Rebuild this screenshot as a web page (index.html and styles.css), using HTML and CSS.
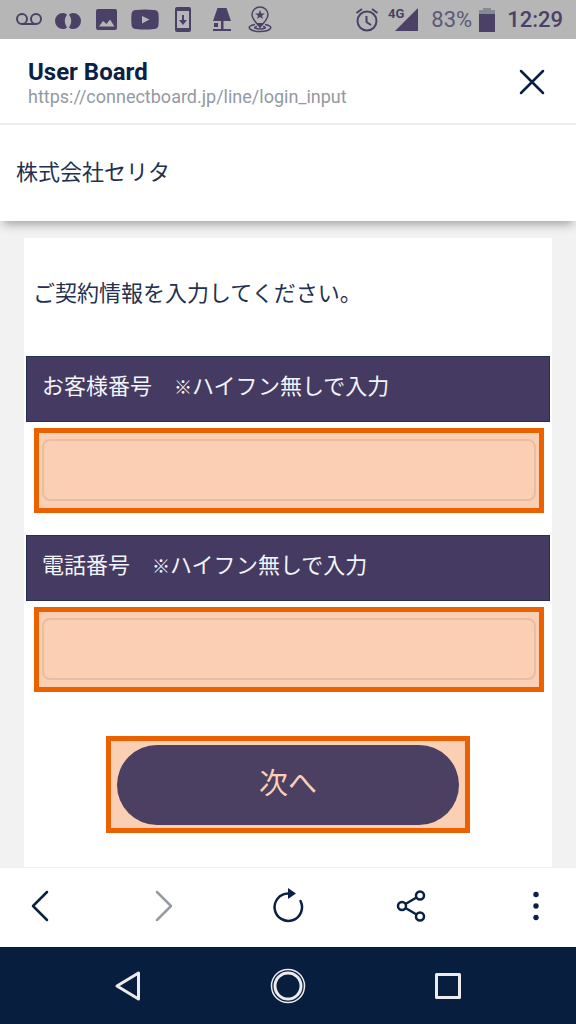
FILE: index.html
```html
<!DOCTYPE html>
<html lang="ja">
<head>
<meta charset="utf-8">
<meta name="viewport" content="width=device-width, initial-scale=1">
<title>User Board</title>
<link rel="stylesheet" href="styles.css">
</head>
<body>
<div class="screen">
  <div class="status">
    <div class="status-icons">
      <svg class="status-icon" viewBox="0 0 28 28" fill="none" stroke="currentColor" stroke-width="2"><circle cx="7" cy="13" r="5"/><circle cx="21" cy="13" r="5"/><path d="M7 18H21"/></svg>
      <svg class="status-icon" viewBox="0 0 28 28" fill="currentColor"><path d="M9 7A8 8 0 0 0 9 23Q11.500 23 13 21.500Q8.500 15 13 8.500Q11.500 7 9 7Z"/><path d="M19 7A8 8 0 0 1 19 23Q16.500 23 15 21.500Q19.500 15 15 8.500Q16.500 7 19 7Z"/></svg>
      <svg class="status-icon" viewBox="0 0 28 28" fill="currentColor" fill-rule="evenodd"><path d="M6 3H23Q25 3 25 5V22Q25 24 23 24H6Q4 24 4 22V5Q4 3 6 3ZM7 20.500H22.500L18 13.500L14.500 18L11 15Z"/></svg>
      <svg class="status-icon" viewBox="0 0 28 28" fill="currentColor" fill-rule="evenodd"><path d="M5 4Q14 3 23 4Q27 4 27.500 8Q28 13 27.500 19Q27 23 23 23Q14 24 5 23Q1 23 .5 19Q0 13 .5 8Q1 4 5 4ZM11 10V17.500L18.500 13.500Z"/></svg>
      <svg class="status-icon" viewBox="0 0 28 28" fill="currentColor" fill-rule="evenodd"><path d="M8 1H20Q22 1 22 3V24Q22 26 20 26H8Q6 26 6 24V3Q6 1 8 1ZM8 5V22H20V5Z"/><path d="M13 9H15V14H18L14 19L10 14H13Z"/></svg>
      <svg class="status-icon" viewBox="0 0 28 28" fill="currentColor"><path d="M9.500 2H18.500L23 15H5Z"/><path d="M13 15H15.500V23H23V25H5V23H13ZM6 17H10V21H6Z"/></svg>
      <svg class="status-icon" viewBox="0 0 28 28" fill="none" stroke="currentColor" stroke-width="1.500"><path d="M14 21Q6 13 6 8.500A8 7.500 0 0 1 22 8.500Q22 13 14 21Z"/><path fill="currentColor" stroke="none" d="M14 4L15.300 7.500H19L16 9.700L17 13L14 11L11 13L12 9.700L9 7.500H12.700ZM10.500 17H17.500L14 22Z"/><path d="M9 18.500C-1 20 3 25.500 14 25.500S29 20 19 18.500M11 20.500C6 21.500 10 23 14 23S22 21.500 17 20.500"/></svg>
    </div>
    <div class="status-info">
      <svg class="alarm" viewBox="0 0 24 26" fill="none" stroke="currentColor" stroke-width="2"><circle cx="12" cy="14" r="9.500"/><path d="M11.500 9V15L16 18M1.500 6L7 2M17 2L22.500 6"/></svg>
      <span class="network">4G</span>
      <svg class="signal" viewBox="0 0 23 24" fill="currentColor"><path d="M0 23H23V0Z"/></svg>
      <span class="percent">83%</span>
      <svg class="battery" viewBox="0 0 16 24"><path fill="#848b93" d="M4 0H12V2H16V6H0V2H4Z"/><path fill="currentColor" d="M0 6H16V24H0Z"/></svg>
      <span class="clock">12:29</span>
    </div>
  </div>

  <header class="browser-bar">
    <div>
      <h1 class="title">User Board</h1>
      <p class="address">https://connectboard.jp/line/login_input</p>
    </div>
    <button class="icon-button" type="button" aria-label="閉じる">
      <svg viewBox="0 0 32 32" fill="none" stroke="currentColor" stroke-width="2.500" stroke-linecap="round"><path d="M5 5L27 27M27 5L5 27"/></svg>
    </button>
  </header>

  <div class="company">株式会社セリタ</div>

  <main class="page">
    <form class="card">
      <p class="prompt">ご契約情報を入力してください。</p>
      <div class="field">
        <label class="field-label" for="customer">お客様番号　<span class="mark">※</span>ハイフン無しで入力</label>
        <div class="highlight"><input class="field-input" id="customer" type="text"></div>
      </div>
      <div class="field">
        <label class="field-label" for="phone">電話番号　<span class="mark">※</span>ハイフン無しで入力</label>
        <div class="highlight"><input class="field-input" id="phone" type="tel"></div>
      </div>
      <div class="highlight highlight-submit"><button class="submit" type="button">次へ</button></div>
    </form>
  </main>

  <nav class="toolbar">
    <button class="icon-button" type="button" aria-label="戻る"><svg viewBox="0 0 32 32" fill="none" stroke="currentColor" stroke-width="2.500" stroke-linecap="round" stroke-linejoin="round"><path d="M23 2L9 16L23 30"/></svg></button>
    <button class="icon-button muted" type="button" aria-label="進む"><svg viewBox="0 0 32 32" fill="none" stroke="currentColor" stroke-width="2.500" stroke-linecap="round" stroke-linejoin="round"><path d="M9 2L23 16L9 30"/></svg></button>
    <button class="icon-button" type="button" aria-label="再読み込み"><svg viewBox="0 0 32 32" fill="none" stroke="currentColor" stroke-width="2.500" stroke-linecap="round"><path d="M17 3.500H16A13.700 13.700 0 1 0 28.500 11"/><path fill="currentColor" stroke="none" d="M16 -2L24 3.500L16 9Z"/></svg></button>
    <button class="icon-button" type="button" aria-label="共有"><svg viewBox="0 0 32 32" fill="none" stroke="currentColor" stroke-width="2.500"><circle cx="6" cy="16" r="4"/><circle cx="24" cy="5.500" r="4"/><circle cx="24" cy="26.500" r="4"/><path d="M9.500 14L20.500 7.500M9.500 18L20.500 24.500"/></svg></button>
    <button class="icon-button" type="button" aria-label="メニュー"><svg viewBox="0 0 32 32" fill="currentColor"><circle cx="16" cy="4.500" r="2.700"/><circle cx="16" cy="16" r="2.700"/><circle cx="16" cy="27.500" r="2.700"/></svg></button>
  </nav>

  <nav class="system-bar">
    <button class="system-button" type="button" aria-label="Back"><svg viewBox="0 0 36 36" fill="none" stroke="currentColor" stroke-width="3" stroke-linejoin="round"><path d="M29.500 5V31L8 18Z"/></svg></button>
    <button class="system-button" type="button" aria-label="Home"><svg viewBox="0 0 36 36" fill="none" stroke="currentColor"><circle cx="18" cy="18" r="16.500" stroke-width="1.500"/><circle cx="18" cy="18" r="13" stroke-width="3"/></svg></button>
    <button class="system-button" type="button" aria-label="Recents"><svg viewBox="0 0 36 36" fill="none" stroke="currentColor" stroke-width="3" stroke-linejoin="round"><path d="M5.500 6.500H28.500V29.500H5.500Z"/></svg></button>
  </nav>
</div>
</body>
</html>
```
FILE: styles.css
```css
* { box-sizing: border-box; }

body {
  margin: 0;
  color: #243050;
  background: #fff;
  font-family: Roboto, "Noto Sans CJK JP", sans-serif;
  font-size: 22px;
}

h1, p { margin: 0; }

button {
  padding: 0;
  border: 0;
  background: none;
  color: inherit;
  font: inherit;
}

svg { display: block; overflow: visible; }

.screen {
  display: flex;
  flex-direction: column;
  min-height: 100vh;
}

.status {
  display: flex;
  justify-content: space-between;
  align-items: center;
  padding: 0 13px 0 15px;
  min-height: 39px;
  background: #b6b6b6;
  color: #4b4167;
}

.status-icons {
  display: flex;
  justify-content: space-between;
  flex: 0 0 45vw;
}

.status-icon { width: 28px; height: 28px; }

.status-info { display: flex; align-items: center; }

.alarm { width: 24px; height: 26px; }

.network {
  align-self: flex-start;
  margin-left: 9px;
  font: bold 13px/16px Roboto, sans-serif;
}

.signal { width: 23px; height: 24px; margin-left: -9px; }

.percent {
  margin-left: 13px;
  color: #5b5b74;
  line-height: 28px;
}

.battery { width: 16px; height: 24px; margin-left: 7px; }

.clock {
  margin-left: 12px;
  font-weight: 500;
  line-height: 28px;
}

.browser-bar {
  display: flex;
  justify-content: space-between;
  align-items: center;
  padding: 18px 28px 16px;
  border-bottom: 2px solid #efeff0;
}

.title {
  color: #0a2145;
  font-size: 24px;
  line-height: 30px;
}

.address {
  color: #9399a1;
  font-size: 18px;
  line-height: 20px;
}

.icon-button { color: #0a2145; }
.icon-button svg { width: 32px; height: 32px; }
.muted { color: #979ba3; }

.company {
  position: relative;
  padding: 30px 16px;
  line-height: 36px;
  background: #fff;
  box-shadow: 0 6px 10px -3px rgba(0, 0, 0, .35);
}

.page {
  flex: 1;
  padding: 17px 24px 0;
  background: #f2f2f2;
}

.card {
  height: 100%;
  padding: 36px 2px 34px;
  background: #fff;
}

.prompt {
  padding: 0 7px;
  margin-bottom: 42px;
  line-height: 40px;
}

.field { margin-bottom: 22px; }

.field-label {
  display: block;
  padding: 12px 15px 16px;
  border: 1px solid #263056;
  background: #453b62;
  color: #f2f5f8;
  line-height: 36px;
}

.mark { font-size: 18px; line-height: 1; }

.highlight {
  margin: 6px 6px 0 8px;
  padding: 6px 3px 7px;
  border: 5px solid #eb6100;
  background: #facfb3;
}

.field-input {
  display: block;
  width: 100%;
  height: 62px;
  padding: 0 12px;
  border: 2px solid #e8bda1;
  border-radius: 8px;
  background: transparent;
  color: inherit;
  font: inherit;
}

.highlight-submit {
  max-width: 364px;
  margin: 44px auto 0;
  padding: 4px 6px 3px;
}

.submit {
  display: block;
  width: 100%;
  padding: 17px 18px 19px;
  border-radius: 40px;
  background: #4b3f62;
  color: #facfb3;
  font-size: 29px;
  line-height: 44px;
}

.toolbar {
  display: flex;
  justify-content: space-between;
  align-items: center;
  padding: 0 24px 4px;
  min-height: 80px;
  border-top: 1px solid #efeff0;
  background: #fff;
}

.system-bar {
  display: flex;
  justify-content: space-between;
  align-items: center;
  padding: 0 19%;
  min-height: 77px;
  background: #081e3f;
  color: #eeebed;
}

.system-button svg { width: 36px; height: 36px; }
```
